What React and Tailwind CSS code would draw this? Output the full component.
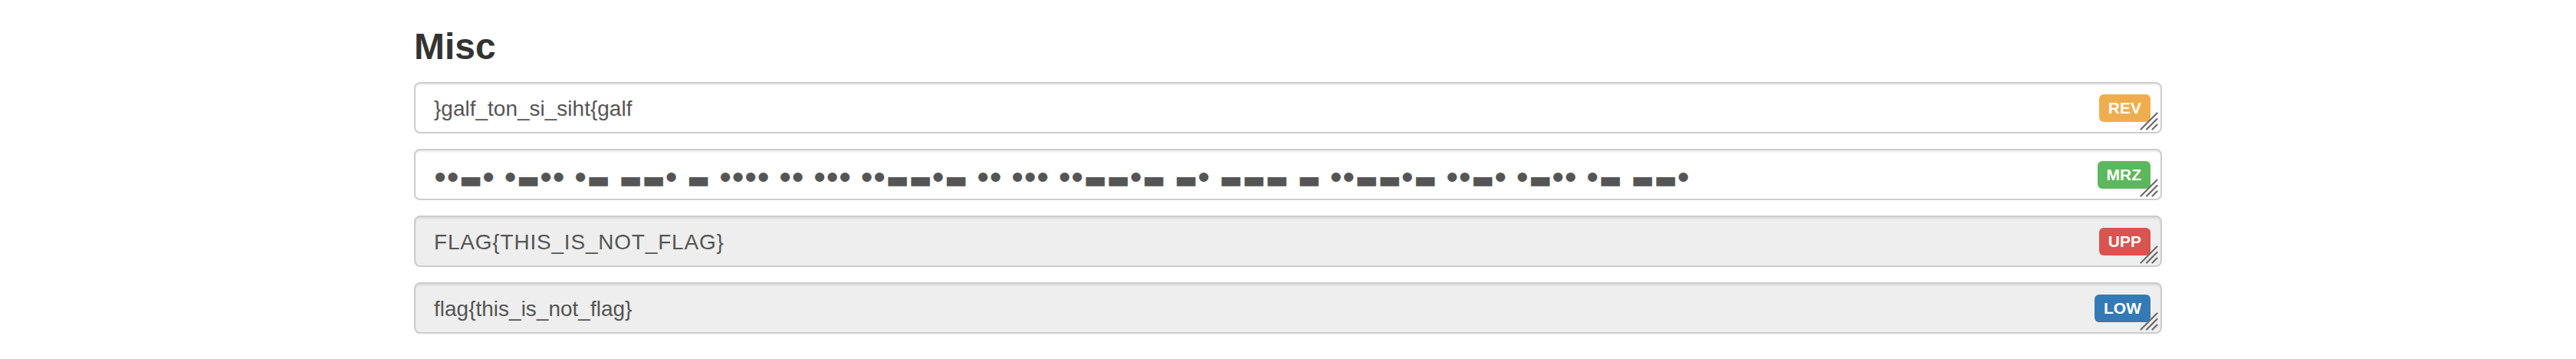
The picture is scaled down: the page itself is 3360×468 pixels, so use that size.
const MORSE = "••▬• •▬•• •▬ ▬▬• ▬ •••• •• ••• ••▬▬•▬ •• ••• ••▬▬•▬ ▬• ▬▬▬ ▬ ••▬▬•▬ ••▬• •▬•• •▬ ▬▬•";

const rows = [
  { text: "}galf_ton_si_siht{galf", label: "REV", color: "bg-[#f0ad4e]", readOnly: false },
  { text: MORSE, label: "MRZ", color: "bg-[#5cb85c]", readOnly: false, morse: true },
  { text: "FLAG{THIS_IS_NOT_FLAG}", label: "UPP", color: "bg-[#d9534f]", readOnly: true, wide: true },
  { text: "flag{this_is_not_flag}", label: "LOW", color: "bg-[#337ab7]", readOnly: true },
];

const Grip = () => (
  <svg
    className="absolute right-[3px] bottom-[2px]"
    width="24"
    height="24"
    viewBox="0 0 24 24"
  >
    <g stroke="#6a6a6a" strokeWidth="2.2" strokeLinecap="round">
      <line x1="1.5" y1="22.5" x2="22.5" y2="1.5" />
      <line x1="9" y1="22.5" x2="22.5" y2="9" />
      <line x1="16.5" y1="22.5" x2="22.5" y2="16.5" />
    </g>
  </svg>
);

// each symbol gets a fixed slot so the line keeps the reference's rhythm
const Morse = ({ text }) => (
  <span className="flex items-center h-[40px] mt-[6px]">
    {text.split("").map((ch, i) =>
      ch === "•" ? (
        <span
          key={i}
          className="w-[16.5px] h-[40px] flex items-center justify-center font-['Liberation_Sans'] text-[45px] leading-[40px]"
        >
          •
        </span>
      ) : ch === "▬" ? (
        <span
          key={i}
          className="w-[30px] h-[40px] flex items-center justify-center font-['DejaVu_Sans'] text-[32px] leading-[40px] translate-y-[3px]"
        >
          ▬
        </span>
      ) : (
        <span key={i} className="w-[12px] shrink-0">
          {" "}
        </span>
      )
    )}
  </span>
);

const App = () => {
  return (
    <div className="w-full min-h-[468px] bg-white text-[#333]">
      <div className="w-[2340px] mx-auto px-[30px]">
        <h3 className="pt-[34px] mb-[20px] text-[48px] leading-[53px] font-bold font-['Liberation_Sans',sans-serif]">
          Misc
        </h3>
        <div className="flex flex-col gap-[20px]">
          {rows.map((row) => (
            <div
              key={row.label}
              className={`relative h-[67px] flex items-center border-2 border-[#ccc] rounded-[8px] shadow-[inset_0_2px_2px_rgba(0,0,0,0.075)] px-[24px] text-[#555] text-[28px] leading-[40px] font-['Liberation_Sans',sans-serif] ${
                row.readOnly ? "bg-[#eee]" : "bg-white"
              }`}
            >
              {row.morse ? (
                <Morse text={row.text} />
              ) : (
                <span className={`mt-[2px] ${row.wide ? "tracking-[0.8px]" : ""}`}>{row.text}</span>
              )}
              <span
                className={`absolute right-[13px] top-1/2 -translate-y-1/2 h-[36px] px-[12px] rounded-[6px] flex items-center text-white text-[21px] font-bold font-['Liberation_Sans',sans-serif] ${row.color}`}
              >
                {row.label}
              </span>
              <Grip />
            </div>
          ))}
        </div>
      </div>
    </div>
  );
};

export default App;
